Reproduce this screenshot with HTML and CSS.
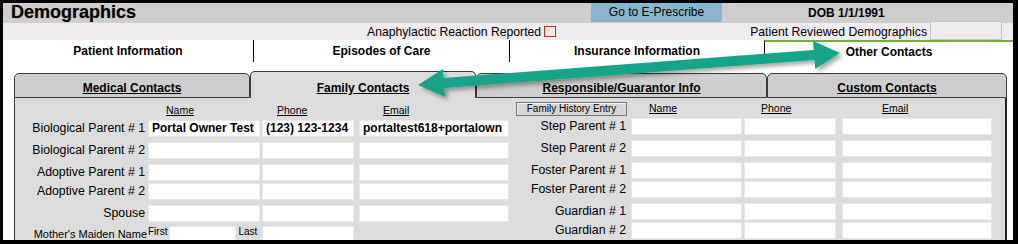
FILE: index.html
```html
<!DOCTYPE html>
<html>
<head>
<meta charset="utf-8">
<title>Demographics</title>
<link rel="stylesheet" href="styles.css">
</head>
<body>
<div class="frame">
  <div class="header">
    <div class="title">Demographics</div>
    <div class="erx">Go to E-Prescribe</div>
    <div class="dob">DOB 1/1/1991</div>
  </div>
  <div class="subbar">
    <span class="ana">Anaphylactic Reaction Reported</span>
    <span class="chk"></span>
    <span class="prd">Patient Reviewed Demographics</span>
    <span class="prd-box"></span>
  </div>
  <div class="tabs">
    <div class="tab t1">Patient Information</div>
    <div class="tab t2">Episodes of Care</div>
    <div class="tab t3">Insurance Information</div>
    <div class="tab t4">Other Contacts</div>
  </div>
  <div class="subtabs">
    <div class="st st-med">Medical Contacts</div>
    <div class="st st-fam active">Family Contacts</div>
    <div class="st st-resp">Responsible/Guarantor Info</div>
    <div class="st st-cust">Custom Contacts</div>
  </div>
  <div class="panel">
    <div class="grid gl">
      <div></div>
      <div class="hd hn">Name</div>
      <div class="hd hp">Phone</div>
      <div class="hd he">Email</div>

      <div class="lb">Biological Parent # 1</div>
      <div><div class="in w112">Portal Owner Test</div></div>
      <div><div class="in w92">(123) 123-1234</div></div>
      <div><div class="in w150">portaltest618+portalown</div></div>

      <div class="lb">Biological Parent # 2</div>
      <div><div class="in w112"></div></div>
      <div><div class="in w92"></div></div>
      <div><div class="in w150"></div></div>

      <div class="lb">Adoptive Parent # 1</div>
      <div><div class="in w112"></div></div>
      <div><div class="in w92"></div></div>
      <div><div class="in w150"></div></div>

      <div class="lb">Adoptive Parent # 2</div>
      <div><div class="in w112"></div></div>
      <div><div class="in w92"></div></div>
      <div><div class="in w150"></div></div>

      <div class="lb">Spouse</div>
      <div><div class="in w112"></div></div>
      <div><div class="in w92"></div></div>
      <div><div class="in w150"></div></div>

      <div class="lb mm-label">Mother's Maiden Name</div>
      <div class="mm"><span>First</span><div class="in w67"></div><span>Last</span></div>
      <div><div class="in w92"></div></div>
      <div></div>
    </div>
    <div class="grid gr">
      <div><div class="fhe">Family History Entry</div></div>
      <div class="hd hn">Name</div>
      <div class="hd hp">Phone</div>
      <div class="hd he">Email</div>

      <div class="lb">Step Parent # 1</div>
      <div><div class="in w111"></div></div>
      <div><div class="in w92"></div></div>
      <div><div class="in w150"></div></div>

      <div class="lb">Step Parent # 2</div>
      <div><div class="in w111"></div></div>
      <div><div class="in w92"></div></div>
      <div><div class="in w150"></div></div>

      <div class="lb">Foster Parent # 1</div>
      <div><div class="in w111"></div></div>
      <div><div class="in w92"></div></div>
      <div><div class="in w150"></div></div>

      <div class="lb">Foster Parent # 2</div>
      <div><div class="in w111"></div></div>
      <div><div class="in w92"></div></div>
      <div><div class="in w150"></div></div>

      <div class="lb">Guardian # 1</div>
      <div><div class="in w111"></div></div>
      <div><div class="in w92"></div></div>
      <div><div class="in w150"></div></div>

      <div class="lb">Guardian # 2</div>
      <div><div class="in w111"></div></div>
      <div><div class="in w92"></div></div>
      <div><div class="in w150"></div></div>
    </div>
  </div>
</div>
<svg class="arrow" width="1018" height="244" viewBox="0 0 1018 244" aria-hidden="true">
  <defs>
    <filter id="sh" x="-10%" y="-60%" width="120%" height="220%">
      <feDropShadow dx="3" dy="3" stdDeviation="2" flood-color="#000" flood-opacity="0.35"/>
    </filter>
  </defs>
  <polygon points="418,85 442.8,69 443.5,78 813.7,50 813,41 840,53 815.2,69 814.5,60 444.3,88 445,97" fill="#17a589" filter="url(#sh)"/>
</svg>
</body>
</html>
```

FILE: styles.css
```css
html, body {
  margin: 0;
}
body {
  position: relative;
  width: 1018px;
  height: 244px;
  padding: 3px 0 0 3px;
  box-sizing: border-box;
  overflow: hidden;
  background: #000;
  color: #000;
  font-family: "Liberation Sans", Arial, sans-serif;
}
.frame {
  width: 1010px;
  height: 237px;
  background: #fff;
  overflow: hidden;
}

/* header */
.header {
  display: flex;
  height: 20px;
  background: #cecece;
}
.title {
  width: 588px;
  padding-left: 8px;
  box-sizing: border-box;
  font-size: 18px;
  font-weight: bold;
  line-height: 18px;
  text-shadow: 0 0 1px rgba(70, 45, 0, 0.45);
}
.erx {
  width: 131px;
  height: 19px;
  background: #87b6ce;
  font-size: 12px;
  line-height: 19px;
  text-align: center;
}
.dob {
  margin-left: 86px;
  font-size: 12px;
  font-weight: bold;
  line-height: 20px;
}

/* sub bar */
.subbar {
  display: flex;
  align-items: center;
  height: 17px;
  padding-left: 364px;
  background: #efebef;
  font-size: 12.2px;
}
.chk {
  width: 10px;
  height: 9px;
  margin-left: 3px;
  border: 1px solid #e02020;
}
.prd {
  margin-left: auto;
}
.prd-box {
  align-self: flex-end;
  width: 72px;
  height: 19px;
  box-sizing: border-box;
  margin: 0 11px 0 3px;
  border: 1px solid #c6c6c6;
  background: #efebef;
}

/* main tabs */
.tabs {
  display: flex;
  height: 22px;
  font-size: 12px;
  font-weight: bold;
}
.tab {
  box-sizing: border-box;
  text-align: center;
  padding-top: 1px;
  line-height: 21px;
}
.t1 { width: 250px; }
.t2 { width: 256px; border-left: 1px solid #000; }
.t3 { width: 255px; border-left: 1px solid #000; }
.t4 {
  width: 249px;
  border-left: 1px solid #000;
  border-top: 2px solid #6ab23e;
  padding-top: 0;
  line-height: 20px;
}

/* sub tabs */
.subtabs {
  display: flex;
  align-items: flex-end;
  height: 27px;
  margin: 9px 0 0 11px;
  font-size: 12px;
  font-weight: bold;
}
.st {
  box-sizing: border-box;
  height: 25px;
  padding-top: 7px;
  border: 1px solid #3a3a3a;
  border-radius: 5px 5px 0 0;
  background: #cecece;
  line-height: 14px;
  text-align: center;
  text-decoration: underline;
}
.st.active {
  height: 27px;
  padding-top: 9px;
  border-bottom: none;
  background: #dcdcdc;
}
.st-med { width: 236px; }
.st-fam { width: 226px; }
.st-resp { width: 291px; }
.st-cust { width: 240px; }

/* panel */
.panel {
  display: flex;
  width: 993px;
  height: 150px;
  margin-left: 11px;
  box-sizing: border-box;
  border-left: 1px solid #3a3a3a;
  border-right: 2px solid #222;
  background: #dcdcdc;
}
.grid {
  display: grid;
  font-size: 12.3px;
}
.gl {
  grid-template-columns: 133px 114px 97px 150px;
  grid-template-rows: 22px 22px 22px 19px 22px 21px 17px;
}
.gr {
  grid-template-columns: 122px 113px 98px 150px;
  grid-template-rows: 20px 22px 22px 19px 22px 19px 17px;
}
.lb {
  padding-right: 3px;
  text-align: right;
  line-height: 17px;
  white-space: nowrap;
}
.gr .lb {
  padding-right: 5px;
}
.in {
  height: 17px;
  box-sizing: border-box;
  padding: 0 3px;
  border: 1px solid #e8e8e8;
  background: #fff;
  font-size: 12px;
  font-weight: bold;
  line-height: 15px;
  white-space: nowrap;
  overflow: hidden;
}
.w67 { width: 67px; }
.w92 { width: 92px; }
.w111 { width: 111px; }
.w112 { width: 112px; }
.w150 { width: 150px; }

.hd {
  font-size: 10.5px;
  line-height: 13px;
  text-decoration: underline;
}
.gl .hd { padding-top: 6px; }
.gr .hd { padding-top: 4px; }
.gl .hn { padding-left: 18px; }
.gl .hp { padding-left: 15px; }
.gl .he { padding-left: 24px; }
.gr .hn { padding-left: 18px; }
.gr .hp { padding-left: 17px; }
.gr .he { padding-left: 40px; }

.fhe {
  width: 111px;
  height: 14px;
  margin: 4px 0 0 7px;
  box-sizing: border-box;
  border: 1px solid #777;
  background: #d6d6d6;
  box-shadow: inset 1px 1px 0 #f2f2f2;
  font-size: 10px;
  line-height: 12px;
  text-align: center;
  white-space: nowrap;
}

.mm-label {
  padding-right: 1px;
  font-size: 11px;
}
.mm {
  display: flex;
  align-items: flex-start;
  font-size: 10px;
  line-height: 12px;
}
.mm .in {
  margin: 0 2px;
}

.arrow {
  position: absolute;
  left: 0;
  top: 0;
  pointer-events: none;
}
```
